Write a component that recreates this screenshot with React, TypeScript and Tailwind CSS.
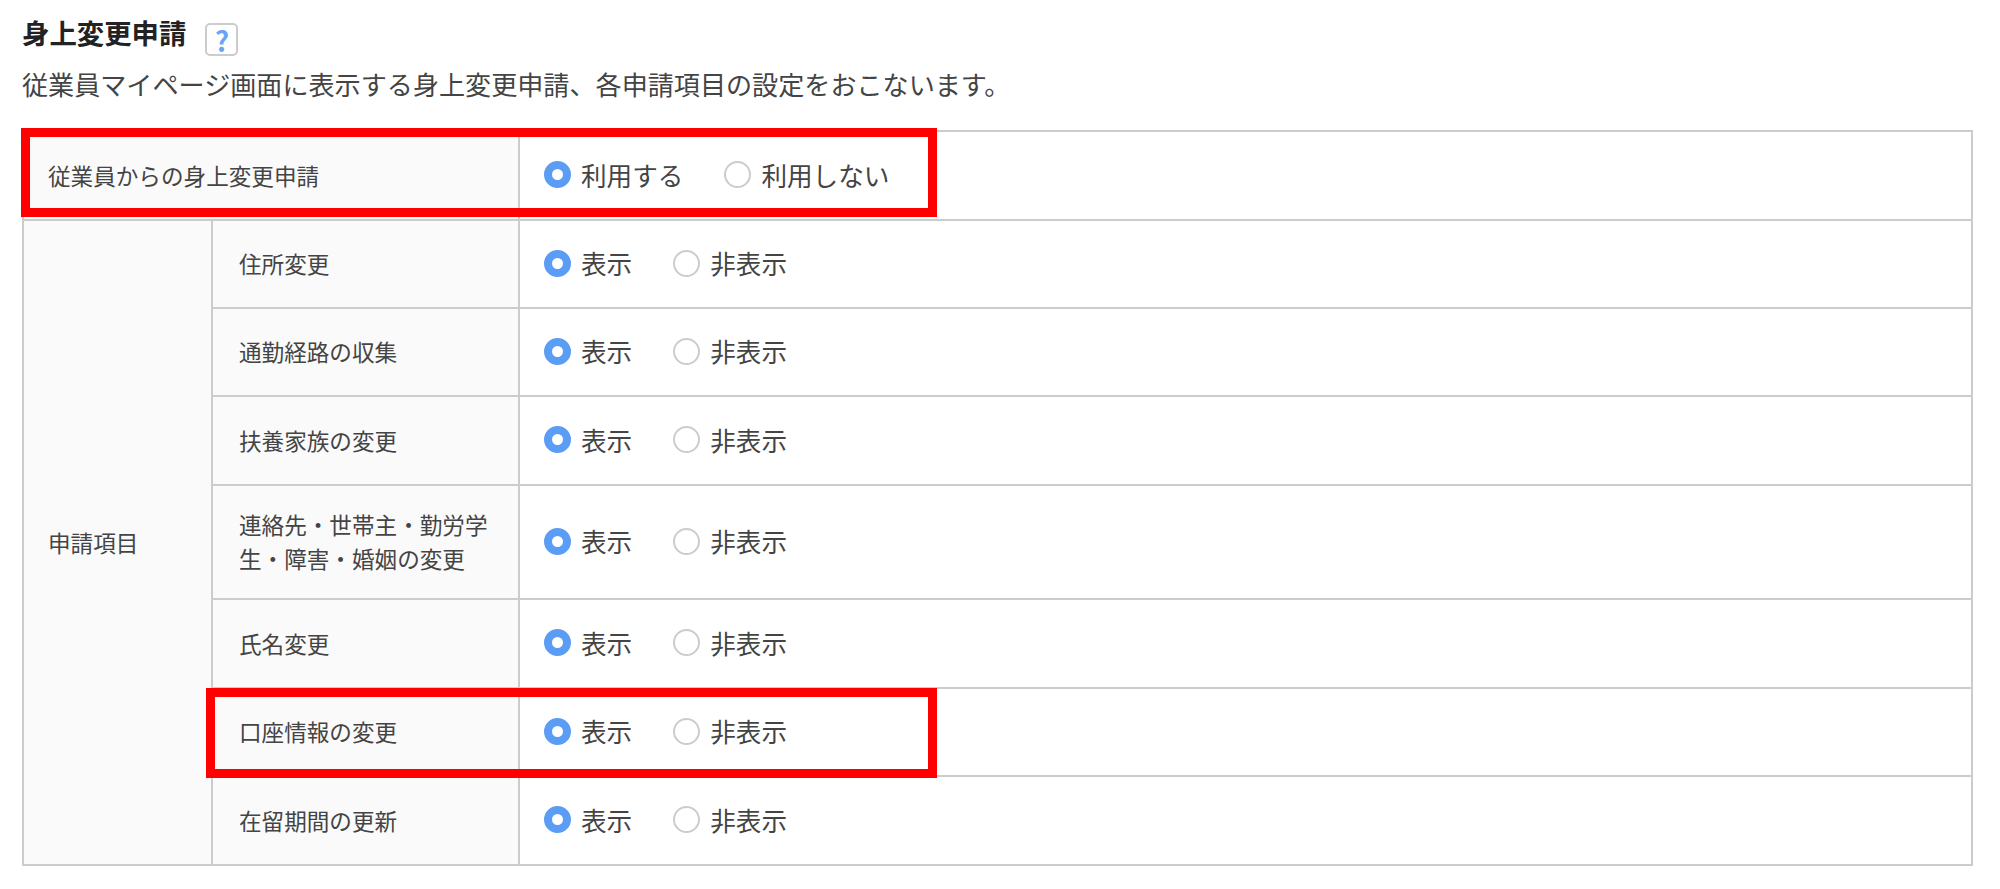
const font = { fontFamily: '"Noto Sans CJK JP", "Noto Sans", sans-serif' };

function Radio({ checked, label }: { checked?: boolean; label: string }) {
  return (
    <span className="flex items-center gap-[10px]">
      {checked ? (
        <span className="box-border block h-[27px] w-[27px] rounded-full border-[8px] border-[#5b9cf4] bg-white" />
      ) : (
        <span className="box-border block h-[27px] w-[27px] rounded-full border-2 border-[#cccccc] bg-white" />
      )}
      <span className="text-[25.6px] leading-[34px] text-[#444444]">{label}</span>
    </span>
  );
}

function Choice({ a, b }: { a: string; b: string }) {
  return (
    <td className="border-2 border-[#cccccc] bg-white pl-6">
      <div className="-mt-[2px] flex items-center gap-[41px]">
        <Radio checked label={a} />
        <Radio label={b} />
      </div>
    </td>
  );
}

const rows: { label: React.ReactNode; h: string }[] = [
  { label: "住所変更", h: "h-[88px]" },
  { label: "通勤経路の収集", h: "h-[88px]" },
  { label: "扶養家族の変更", h: "h-[89px]" },
  { label: <>連絡先・世帯主・勤労学<br />生・障害・婚姻の変更</>, h: "h-[114px]" },
  { label: "氏名変更", h: "h-[89px]" },
  { label: "口座情報の変更", h: "h-[88px]" },
  { label: "在留期間の更新", h: "h-[89px]" },
];

export default function App() {
  return (
    <div className="relative h-[889px] w-[2000px] overflow-hidden bg-white text-[#444444]" style={font}>
      <div className="pl-[22px] pt-[14px]">
        <div className="flex items-start gap-[19px]">
          <h1 className="text-[27.4px] font-bold leading-[36px] text-[#222222]">身上変更申請</h1>
          <span className="mt-[9px] flex h-[33px] w-[33px] items-center justify-center rounded-[5px] border-2 border-[#cccccc] bg-white text-[28px] font-bold leading-none text-[#6aa5f5]">?</span>
        </div>
        <p className="mt-[10px] text-[26.1px] leading-[36px] text-[#444444]">従業員マイページ画面に表示する身上変更申請、各申請項目の設定をおこないます。</p>
        <table className="mt-[28px] w-[1951px] table-fixed border-collapse">
          <colgroup>
            <col className="w-[189px]" />
            <col className="w-[307px]" />
            <col />
          </colgroup>
          <tbody>
            <tr className="h-[89px]">
              <td colSpan={2} className="border-2 border-[#cccccc] bg-[#fafafa] pl-[24px] text-[22.6px]">従業員からの身上変更申請</td>
              <Choice a="利用する" b="利用しない" />
            </tr>
            {rows.map((r, i) => (
              <tr key={i} className={r.h}>
                {i === 0 && (
                  <td rowSpan={7} className="border-2 border-[#cccccc] bg-[#fafafa] pl-[24px] text-[22.6px]">申請項目</td>
                )}
                <td className="border-2 border-[#cccccc] bg-[#fafafa] pl-[26px] text-[22.6px] leading-[34px]">{r.label}</td>
                <Choice a="表示" b="非表示" />
              </tr>
            ))}
          </tbody>
        </table>
      </div>
      <div className="absolute left-[21px] top-[128px] h-[89px] w-[916px] border-[9px] border-[#ff0000]" />
      <div className="absolute left-[206px] top-[688px] h-[90px] w-[731px] border-[9px] border-[#ff0000]" />
    </div>
  );
}
